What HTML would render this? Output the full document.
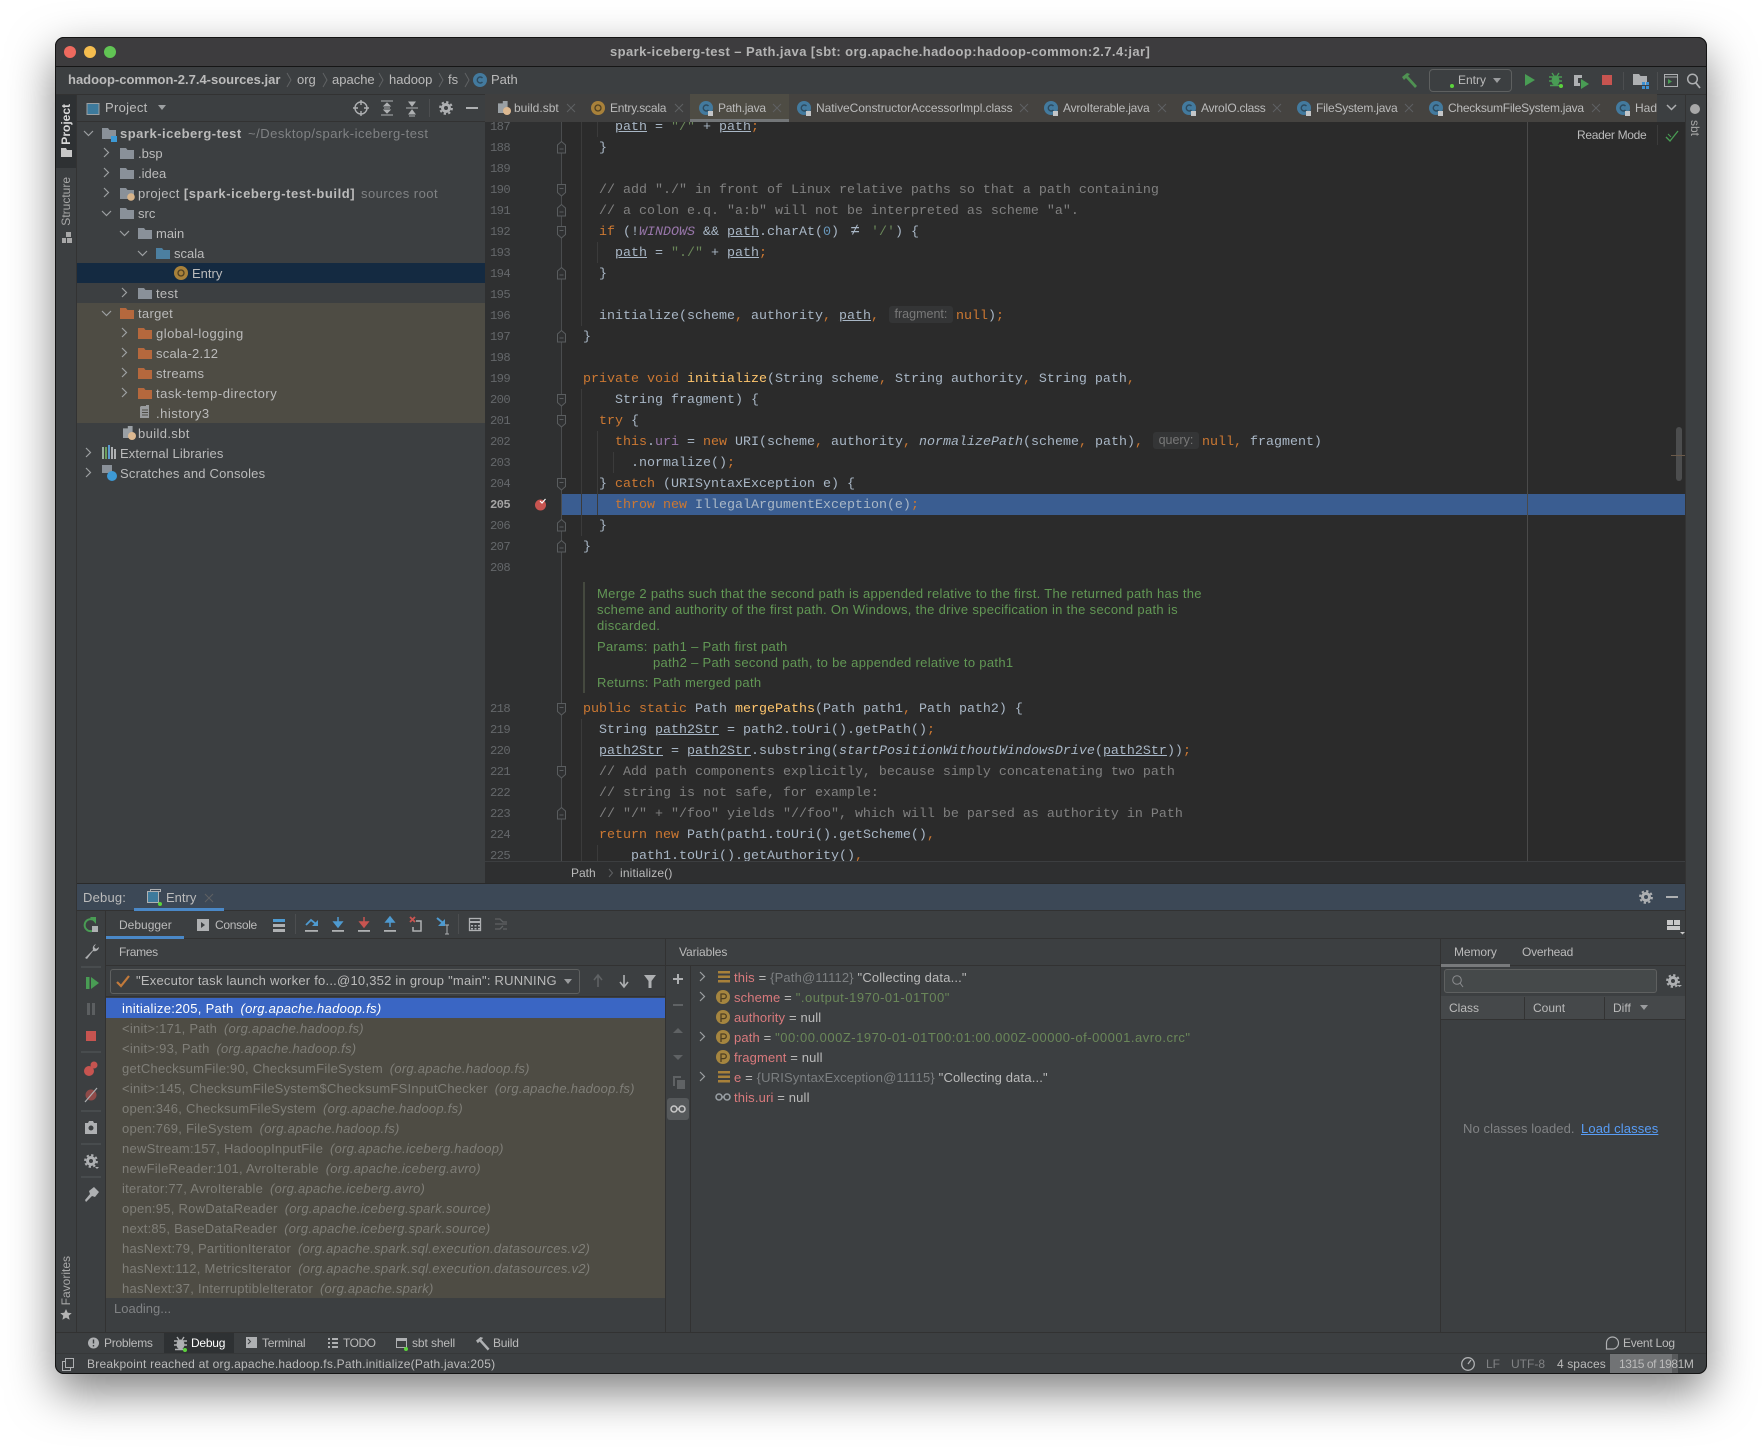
<!DOCTYPE html>
<html><head><meta charset="utf-8"><title>spark-iceberg-test – Path.java</title>
<style>
html,body{margin:0;padding:0;background:#fff;width:1762px;height:1448px;overflow:hidden}
body{position:relative;font-family:"Liberation Sans",sans-serif;font-size:13px;color:#bbb}
.b{position:absolute}
.t{position:absolute;white-space:pre;line-height:20px;height:20px}
.s{font-size:12px}
.m{color:#808284}
.c{position:absolute;left:583px;margin-top:1px;white-space:pre;font-family:"Liberation Mono",monospace;font-size:13.33px;line-height:21px;height:21px;color:#a9b7c6}
.n{position:absolute;left:490px;margin-top:1px;font-family:"Liberation Mono",monospace;font-size:12.2px;letter-spacing:-.65px;line-height:21px;color:#64676a}
.k{color:#cc7832}.f{color:#ffc66d}.g{color:#808080}.st{color:#6a8759}.u{text-decoration:underline}.w{color:#9876aa;font-style:italic}.i{font-style:italic}.q{color:#9876aa}.h{color:#6897bb}
.ne{display:inline-block;width:16px;text-align:center;font-size:16px;line-height:16px}
.ch{display:inline-block;background:#343536;color:#787878;border-radius:3px;font-family:"Liberation Sans",sans-serif;font-size:12.5px;line-height:17px;text-align:center;margin:0 3px 0 10px;vertical-align:1px}
.d{position:absolute;left:597px;white-space:pre;color:#629755;font-size:13px;line-height:16px;letter-spacing:.32px}
.fr{position:absolute;left:122px;margin-top:1px;white-space:pre;color:#7f7e78;font-size:13px;line-height:20px;letter-spacing:.25px}
.fr i{margin-left:3px}
.v{position:absolute;left:734px;margin-top:1px;white-space:pre;line-height:20px;font-size:13px;color:#bbb;letter-spacing:.15px}
.v b{font-weight:normal;color:#d97a7d}.v em{font-style:normal;color:#7c7f81}.v s{text-decoration:none;color:#6a8759;letter-spacing:.52px}
.vt{position:absolute;writing-mode:vertical-rl;transform:rotate(180deg);white-space:pre;font-size:12px;line-height:14px}
.tr .t{margin-top:1px}
</style></head><body>
<div class="b" style="left:55px;top:37px;width:1652px;height:1337px;border-radius:9px;background:#3c3f41;box-shadow:0 18px 46px rgba(0,0,0,.5);overflow:hidden">
</div>
<!-- title -->
<div class="b" style="left:55px;top:37px;width:1652px;height:29px;background:#3d3c3e;border-radius:9px 9px 0 0"></div>
<div class="b" style="left:55px;top:66px;width:1652px;height:1px;background:#161616"></div>
<div class="t" style="left:610px;top:42px;font-weight:bold;color:#b4b4b4;font-size:13px;letter-spacing:.42px">spark-iceberg-test – Path.java [sbt: org.apache.hadoop:hadoop-common:2.7.4:jar]</div>
<!-- nav -->
<div class="b" style="left:55px;top:94px;width:1652px;height:1px;background:#323232"></div>
<div class="t" style="left:68px;top:70px;font-weight:bold">hadoop-common-2.7.4-sources.jar</div>
<div class="t" style="left:297px;top:70px">org</div><div class="t" style="left:332px;top:70px">apache</div><div class="t" style="left:389px;top:70px">hadoop</div><div class="t" style="left:448px;top:70px">fs</div><div class="t" style="left:491px;top:70px">Path</div>
<div class="b" style="left:1429px;top:69px;width:81px;height:21px;border:1px solid #5e6060;border-radius:4px"></div>
<div class="t" style="left:1458px;top:70px;font-size:12px">Entry</div>
<div class="b" style="left:1623px;top:72px;width:1px;height:18px;background:#4c4e50"></div>
<div class="b" style="left:1657px;top:72px;width:1px;height:18px;background:#4c4e50"></div>
<!-- left strip -->
<div class="b" style="left:76px;top:95px;width:1px;height:1238px;background:#333"></div>
<div class="b" style="left:56px;top:95px;width:20px;height:73px;background:#2e3133"></div>
<div class="vt" style="left:59px;top:104px;font-weight:bold;color:#d8d8d8">Project</div>
<div class="vt" style="left:59px;top:177px;color:#a8a8a8">Structure</div>
<div class="vt" style="left:59px;top:1256px;color:#a8a8a8">Favorites</div>
<!-- project -->
<div class="b" style="left:77px;top:121px;width:408px;height:1px;background:#323232"></div>
<div class="t" style="left:105px;top:98px;letter-spacing:.3px">Project</div>
<div class="b" style="left:429px;top:99px;width:1px;height:18px;background:#4c4e50"></div>
<div class="b" style="left:77px;top:263px;width:408px;height:20px;background:#142a41"></div>
<div class="b" style="left:77px;top:303px;width:408px;height:120px;background:#4e4c44"></div>
<div class="tr">
<div class="t" style="left:120px;top:123px;font-weight:bold;letter-spacing:.5px">spark-iceberg-test</div><div class="t m" style="left:248px;top:123px;letter-spacing:.5px">~/Desktop/spark-iceberg-test</div>
<div class="t" style="left:138px;top:143px">.bsp</div>
<div class="t" style="left:138px;top:163px">.idea</div>
<div class="t" style="left:138px;top:183px;letter-spacing:.4px">project <b style="letter-spacing:.56px">[spark-iceberg-test-build]</b></div><div class="t m" style="left:361px;top:183px;letter-spacing:.46px">sources root</div>
<div class="t" style="left:138px;top:203px">src</div>
<div class="t" style="left:156px;top:223px">main</div>
<div class="t" style="left:174px;top:243px">scala</div>
<div class="t" style="left:192px;top:263px">Entry</div>
<div class="t" style="left:156px;top:283px;letter-spacing:.3px">test</div>
<div class="t" style="left:138px;top:303px;letter-spacing:.3px">target</div>
<div class="t" style="left:156px;top:323px;letter-spacing:.48px">global-logging</div>
<div class="t" style="left:156px;top:343px;letter-spacing:.22px">scala-2.12</div>
<div class="t" style="left:156px;top:363px;letter-spacing:.3px">streams</div>
<div class="t" style="left:156px;top:383px;letter-spacing:.53px">task-temp-directory</div>
<div class="t" style="left:156px;top:403px;letter-spacing:.5px">.history3</div>
<div class="t" style="left:138px;top:423px;letter-spacing:.37px">build.sbt</div>
<div class="t" style="left:120px;top:443px;letter-spacing:.13px">External Libraries</div>
<div class="t" style="left:120px;top:463px;letter-spacing:.2px">Scratches and Consoles</div>
</div>
<!-- tabs -->
<div class="b" style="left:485px;top:94px;width:205px;height:28px;background:#3f3f3f"></div>
<div class="b" style="left:690px;top:94px;width:99px;height:25px;background:#4e4c44"></div>
<div class="b" style="left:690px;top:119px;width:99px;height:3px;background:#737678"></div>
<div class="b" style="left:789px;top:94px;width:868px;height:28px;background:#454340"></div>
<div class="b" style="left:1685px;top:94px;width:1px;height:1238px;background:#333"></div>
<div class="t s" style="left:514px;top:98px">build.sbt</div>
<div class="t s" style="left:610px;top:98px;letter-spacing:-.2px">Entry.scala</div>
<div class="t s" style="left:718px;top:98px;letter-spacing:-.25px">Path.java</div>
<div class="t s" style="left:816px;top:98px;letter-spacing:-.06px">NativeConstructorAccessorImpl.class</div>
<div class="t s" style="left:1063px;top:98px;letter-spacing:-.2px">AvroIterable.java</div>
<div class="t s" style="left:1201px;top:98px;letter-spacing:-.28px">AvroIO.class</div>
<div class="t s" style="left:1316px;top:98px;letter-spacing:-.22px">FileSystem.java</div>
<div class="t s" style="left:1448px;top:98px;letter-spacing:-.24px">ChecksumFileSystem.java</div>
<div class="b" style="left:1635px;top:98px;width:22px;height:20px;overflow:hidden"><div class="t s" style="left:0;top:0">Hadoop</div></div>
<div class="t s" style="left:1688px;top:120px;writing-mode:vertical-rl;line-height:14px;height:auto;color:#a8a8a8">sbt</div>
<!-- editor -->
<div class="b" style="left:485px;top:122px;width:1200px;height:739px;background:#2b2b2b"></div>
<div class="b" style="left:485px;top:122px;width:77px;height:739px;background:#2f3031"></div>
<div class="b" style="left:562px;top:494px;width:1123px;height:21px;background:#3a5d91"></div>
<div class="b" style="left:1527px;top:122px;width:1px;height:739px;background:#4a4a4a"></div>
<div class="b" style="left:561px;top:122px;width:1px;height:739px;background:#4a4c4e"></div>
<div class="b" style="left:581px;top:122px;width:1px;height:204px;background:#3b3b3b"></div>
<div class="b" style="left:581px;top:389px;width:1px;height:147px;background:#3b3b3b"></div>
<div class="b" style="left:597px;top:122px;width:1px;height:15px;background:#3b3b3b"></div>
<div class="b" style="left:597px;top:242px;width:1px;height:21px;background:#3b3b3b"></div>
<div class="b" style="left:597px;top:431px;width:1px;height:84px;background:#3b3b3b"></div>
<div class="b" style="left:613px;top:452px;width:1px;height:21px;background:#3b3b3b"></div>
<div class="b" style="left:581px;top:719px;width:1px;height:142px;background:#3b3b3b"></div>
<div class="b" style="left:597px;top:845px;width:1px;height:16px;background:#3b3b3b"></div>
<div class="b" style="left:583px;top:582px;width:2px;height:111px;background:#45493f"></div>
<div class="b" style="left:1676px;top:427px;width:6px;height:54px;background:#4c4d4e;border-radius:3px"></div>
<div class="b" style="left:1671px;top:455px;width:14px;height:1px;background:#6b5a4a"></div>
<div class="t s" style="left:1577px;top:125px;letter-spacing:-.3px">Reader Mode</div>
<div class="b" style="left:1657px;top:125px;width:1px;height:20px;background:#3b3b3b"></div>
<div class="b" style="left:0;top:0;width:1762px;height:1448px;clip-path:inset(122px 0 587px 0)">
<div class="n" style="top:116px">187</div><div class="n" style="top:137px">188</div><div class="n" style="top:158px">189</div><div class="n" style="top:179px">190</div><div class="n" style="top:200px">191</div><div class="n" style="top:221px">192</div><div class="n" style="top:242px">193</div><div class="n" style="top:263px">194</div><div class="n" style="top:284px">195</div><div class="n" style="top:305px">196</div><div class="n" style="top:326px">197</div><div class="n" style="top:347px">198</div><div class="n" style="top:368px">199</div><div class="n" style="top:389px">200</div><div class="n" style="top:410px">201</div><div class="n" style="top:431px">202</div><div class="n" style="top:452px">203</div><div class="n" style="top:473px">204</div><div class="n" style="top:494px;color:#a4a3a3;font-weight:bold">205</div><div class="n" style="top:515px">206</div><div class="n" style="top:536px">207</div><div class="n" style="top:557px">208</div><div class="n" style="top:698px">218</div><div class="n" style="top:719px">219</div><div class="n" style="top:740px">220</div><div class="n" style="top:761px">221</div><div class="n" style="top:782px">222</div><div class="n" style="top:803px">223</div><div class="n" style="top:824px">224</div><div class="n" style="top:845px">225</div>
<div class="c" style="top:116px">    <span class="u">path</span> = <span class="st">"/"</span> + <span class="u">path</span><span class="k">;</span></div>
<div class="c g" style="top:137px;color:#a9b7c6">  }</div>
<div class="c g" style="top:179px;color:#808080">  // add "./" in front of Linux relative paths so that a path containing</div>
<div class="c g" style="top:200px;color:#808080">  // a colon e.q. "a:b" will not be interpreted as scheme "a".</div>
<div class="c" style="top:221px">  <span class="k">if</span> (!<span class="w">WINDOWS</span> &amp;&amp; <span class="u">path</span>.charAt(<span class="h">0</span>) <span class="ne">≠</span> <span class="st">'/'</span>) {</div>
<div class="c" style="top:242px">    <span class="u">path</span> = <span class="st">"./"</span> + <span class="u">path</span><span class="k">;</span></div>
<div class="c" style="top:263px">  }</div>
<div class="c" style="top:305px">  initialize(scheme<span class="k">,</span> authority<span class="k">,</span> <span class="u">path</span><span class="k">,</span><span class="ch" style="width:64px">fragment:</span><span class="k">null</span>)<span class="k">;</span></div>
<div class="c" style="top:326px">}</div>
<div class="c" style="top:368px"><span class="k">private void</span> <span class="f">initialize</span>(String scheme<span class="k">,</span> String authority<span class="k">,</span> String path<span class="k">,</span></div>
<div class="c" style="top:389px">    String fragment) {</div>
<div class="c" style="top:410px">  <span class="k">try</span> {</div>
<div class="c" style="top:431px">    <span class="k">this</span>.<span class="q">uri</span> = <span class="k">new</span> URI(scheme<span class="k">,</span> authority<span class="k">,</span> <span class="i">normalizePath</span>(scheme<span class="k">,</span> path)<span class="k">,</span><span class="ch" style="width:46px">query:</span><span class="k">null,</span> fragment)</div>
<div class="c" style="top:452px">      .normalize()<span class="k">;</span></div>
<div class="c" style="top:473px">  } <span class="k">catch</span> (URISyntaxException e) {</div>
<div class="c" style="top:494px">    <span class="k">throw new</span> IllegalArgumentException(e)<span class="k">;</span></div>
<div class="c" style="top:515px">  }</div>
<div class="c" style="top:536px">}</div>
<div class="c" style="top:698px"><span class="k">public static</span> Path <span class="f">mergePaths</span>(Path path1<span class="k">,</span> Path path2) {</div>
<div class="c" style="top:719px">  String <span class="u">path2Str</span> = path2.toUri().getPath()<span class="k">;</span></div>
<div class="c" style="top:740px">  <span class="u">path2Str</span> = <span class="u">path2Str</span>.substring(<span class="i">startPositionWithoutWindowsDrive</span>(<span class="u">path2Str</span>))<span class="k">;</span></div>
<div class="c" style="top:761px;color:#808080">  // Add path components explicitly, because simply concatenating two path</div>
<div class="c" style="top:782px;color:#808080">  // string is not safe, for example:</div>
<div class="c" style="top:803px;color:#808080">  // "/" + "/foo" yields "//foo", which will be parsed as authority in Path</div>
<div class="c" style="top:824px">  <span class="k">return new</span> Path(path1.toUri().getScheme()<span class="k">,</span></div>
<div class="c" style="top:845px">      path1.toUri().getAuthority()<span class="k">,</span></div>
</div>
<div class="d" style="top:586px">Merge 2 paths such that the second path is appended relative to the first. The returned path has the</div>
<div class="d" style="top:602px">scheme and authority of the first path. On Windows, the drive specification in the second path is</div>
<div class="d" style="top:618px">discarded.</div>
<div class="d" style="top:639px">Params:</div><div class="d" style="top:639px;left:653px">path1 – Path first path</div>
<div class="d" style="top:655px;left:653px">path2 – Path second path, to be appended relative to path1</div>
<div class="d" style="top:675px">Returns:</div><div class="d" style="top:675px;left:653px">Path merged path</div>
<!-- breadcrumb -->
<div class="b" style="left:485px;top:861px;width:1200px;height:22px;background:#2e2f30;border-top:1px solid #3c3e40;box-sizing:border-box"></div>
<div class="t s" style="left:571px;top:863px">Path</div><div class="t s" style="left:620px;top:863px;letter-spacing:.15px">initialize()</div>
<!-- debug -->
<div class="b" style="left:77px;top:883px;width:1608px;height:1px;background:#2a2a2a"></div>
<div class="b" style="left:77px;top:884px;width:1608px;height:26px;background:#3c4856"></div>
<div class="b" style="left:77px;top:910px;width:1608px;height:1px;background:#323232"></div>
<div class="b" style="left:134px;top:908px;width:90px;height:3px;background:#4a88c7"></div>
<div class="t" style="left:83px;top:888px;letter-spacing:.2px">Debug:</div><div class="t" style="left:166px;top:888px">Entry</div>
<div class="b" style="left:105px;top:911px;width:1px;height:421px;background:#323232"></div>
<div class="b" style="left:106px;top:938px;width:1579px;height:1px;background:#323232"></div>
<div class="b" style="left:106px;top:936px;width:78px;height:3px;background:#4a88c7"></div>
<div class="t s" style="left:119px;top:915px">Debugger</div><div class="t s" style="left:215px;top:915px;letter-spacing:-.3px">Console</div>
<div class="b" style="left:295px;top:914px;width:1px;height:20px;background:#4c4e50"></div>
<div class="b" style="left:458px;top:914px;width:1px;height:20px;background:#4c4e50"></div>
<div class="b" style="left:665px;top:939px;width:1px;height:393px;background:#323232"></div>
<div class="b" style="left:690px;top:965px;width:1px;height:367px;background:#323232"></div>
<div class="b" style="left:1440px;top:939px;width:1px;height:393px;background:#323232"></div>
<div class="b" style="left:106px;top:965px;width:1579px;height:1px;background:#323232"></div>
<div class="t s" style="left:119px;top:942px;letter-spacing:-.3px">Frames</div><div class="t s" style="left:679px;top:942px;letter-spacing:-.1px">Variables</div>
<div class="b" style="left:110px;top:969px;width:468px;height:23px;border:1px solid #5e6060;border-radius:3px"></div>
<div class="t" style="left:136px;top:971px;letter-spacing:.23px">"Executor task launch worker fo...@10,352 in group "main": RUNNING</div>
<div class="b" style="left:106px;top:996px;width:559px;height:1px;background:#323232"></div>
<div class="b" style="left:106px;top:998px;width:559px;height:20px;background:#3a66c4"></div>
<div class="b" style="left:106px;top:1018px;width:559px;height:280px;background:#4e4c44"></div>
<div class="fr" style="top:998px;color:#fff;letter-spacing:.3px">initialize:205, Path <i>(org.apache.hadoop.fs)</i></div>
<div class="fr" style="top:1018px">&lt;init&gt;:171, Path <i>(org.apache.hadoop.fs)</i></div>
<div class="fr" style="top:1038px">&lt;init&gt;:93, Path <i>(org.apache.hadoop.fs)</i></div>
<div class="fr" style="top:1058px">getChecksumFile:90, ChecksumFileSystem <i>(org.apache.hadoop.fs)</i></div>
<div class="fr" style="top:1078px">&lt;init&gt;:145, ChecksumFileSystem$ChecksumFSInputChecker <i>(org.apache.hadoop.fs)</i></div>
<div class="fr" style="top:1098px">open:346, ChecksumFileSystem <i>(org.apache.hadoop.fs)</i></div>
<div class="fr" style="top:1118px">open:769, FileSystem <i>(org.apache.hadoop.fs)</i></div>
<div class="fr" style="top:1138px">newStream:157, HadoopInputFile <i>(org.apache.iceberg.hadoop)</i></div>
<div class="fr" style="top:1158px">newFileReader:101, AvroIterable <i>(org.apache.iceberg.avro)</i></div>
<div class="fr" style="top:1178px">iterator:77, AvroIterable <i>(org.apache.iceberg.avro)</i></div>
<div class="fr" style="top:1198px">open:95, RowDataReader <i>(org.apache.iceberg.spark.source)</i></div>
<div class="fr" style="top:1218px">next:85, BaseDataReader <i>(org.apache.iceberg.spark.source)</i></div>
<div class="fr" style="top:1238px">hasNext:79, PartitionIterator <i>(org.apache.spark.sql.execution.datasources.v2)</i></div>
<div class="fr" style="top:1258px">hasNext:112, MetricsIterator <i>(org.apache.spark.sql.execution.datasources.v2)</i></div>
<div class="fr" style="top:1278px">hasNext:37, InterruptibleIterator <i>(org.apache.spark)</i></div>
<div class="t m" style="left:114px;top:1299px">Loading...</div>
<div class="b" style="left:667px;top:1098px;width:22px;height:22px;background:#56595b;border-radius:3px"></div>
<div class="v" style="top:967px"><b>this</b> = <em>{Path@11112}</em> "Collecting data..."</div>
<div class="v" style="top:987px"><b>scheme</b> = <s>".output-1970-01-01T00"</s></div>
<div class="v" style="top:1007px"><b>authority</b> = null</div>
<div class="v" style="top:1027px"><b>path</b> = <s>"00:00.000Z-1970-01-01T00:01:00.000Z-00000-of-00001.avro.crc"</s></div>
<div class="v" style="top:1047px"><b>fragment</b> = null</div>
<div class="v" style="top:1067px"><b>e</b> = <em>{URISyntaxException@11115}</em> "Collecting data..."</div>
<div class="v" style="top:1087px"><b>this.uri</b> = null</div>
<div class="t s" style="left:1454px;top:942px;letter-spacing:-.1px">Memory</div><div class="t s" style="left:1522px;top:942px;letter-spacing:-.2px">Overhead</div>
<div class="b" style="left:1441px;top:964px;width:69px;height:3px;background:#787a7c"></div>
<div class="b" style="left:1444px;top:969px;width:211px;height:22px;border:1px solid #5e6060;border-radius:3px;background:#45494a"></div>
<div class="b" style="left:1441px;top:996px;width:244px;height:24px;background:#45484a;border-bottom:1px solid #323232;box-sizing:border-box"></div>
<div class="b" style="left:1524px;top:997px;width:1px;height:22px;background:#333"></div><div class="b" style="left:1604px;top:997px;width:1px;height:22px;background:#333"></div>
<div class="t s" style="left:1449px;top:998px">Class</div><div class="t s" style="left:1533px;top:998px">Count</div><div class="t s" style="left:1613px;top:998px">Diff</div>
<div class="t m" style="left:1463px;top:1119px;letter-spacing:.1px">No classes loaded.</div><div class="t" style="left:1581px;top:1119px;color:#589df6;text-decoration:underline;letter-spacing:.12px">Load classes</div>
<!-- bottom -->
<div class="b" style="left:56px;top:1332px;width:1650px;height:1px;background:#323232"></div>
<div class="b" style="left:56px;top:1353px;width:1650px;height:1px;background:#363839"></div>
<div class="b" style="left:164px;top:1333px;width:70px;height:20px;background:#2e3133"></div>
<div class="t s" style="left:104px;top:1333px;letter-spacing:-.25px">Problems</div>
<div class="t s" style="left:191px;top:1333px;color:#fff;letter-spacing:-.25px">Debug</div>
<div class="t s" style="left:262px;top:1333px;letter-spacing:-.25px">Terminal</div>
<div class="t s" style="left:343px;top:1333px;letter-spacing:-.5px">TODO</div>
<div class="t s" style="left:412px;top:1333px;letter-spacing:-.1px">sbt shell</div>
<div class="t s" style="left:493px;top:1333px;letter-spacing:-.2px">Build</div>
<div class="t s" style="left:1623px;top:1333px;letter-spacing:-.25px">Event Log</div>
<div class="t s" style="left:87px;top:1354px;letter-spacing:.22px">Breakpoint reached at org.apache.hadoop.fs.Path.initialize(Path.java:205)</div>
<div class="b" style="left:1610px;top:1354px;width:62px;height:19px;background:#717375"></div>
<div class="b" style="left:1672px;top:1354px;width:6px;height:19px;background:#585a5c"></div>
<div class="t s m" style="left:1486px;top:1354px">LF</div><div class="t s m" style="left:1511px;top:1354px">UTF-8</div><div class="t s" style="left:1557px;top:1354px;letter-spacing:.1px">4 spaces</div><div class="t s" style="left:1619px;top:1354px;letter-spacing:-.43px">1315 of 1981M</div>

<!-- icons -->
<svg class="b" style="left:0;top:0" width="1762" height="1448" viewBox="0 0 1762 1448">
<defs>
<g id="fo"><path d="M0 0h6l1.5 2H14v9H0z"/></g>
<g id="cr"><path d="M1 0l4.5 4.5L1 9" fill="none" stroke="#9da0a2" stroke-width="1.2"/></g>
<g id="cd"><path d="M0 1l4.5 4.5L9 1" fill="none" stroke="#9da0a2" stroke-width="1.2"/></g>
<g id="xx"><path d="M0 0l8 8M8 0L0 8" stroke="#5f6163" stroke-width="1" fill="none"/></g>
<g id="cl"><circle cx="7" cy="7" r="7" fill="#437a9e"/><path d="M9.5 5A3 3 0 1 0 9.5 9" fill="none" stroke="#2d4a5e" stroke-width="1.4"/><rect x="9" y="10" width="5" height="5" fill="#c4c6c8"/></g>
<g id="cn"><circle cx="7" cy="7" r="7" fill="#437a9e"/><path d="M9.5 5A3 3 0 1 0 9.5 9" fill="none" stroke="#2d4a5e" stroke-width="1.4"/></g>
<g id="ob"><circle cx="7" cy="7" r="7" fill="#a8813a"/><circle cx="7" cy="7" r="3" fill="none" stroke="#4e3f22" stroke-width="1.3"/></g>
<g id="sb"><path d="M0 2h4V0h4v10H0z" fill="#9aa0a5" transform="translate(1 0) scale(1.2)"/><circle cx="10" cy="10" r="4" fill="#dcb890"/></g>
<g id="pp"><circle cx="7" cy="7" r="7" fill="#a5853f"/><path d="M5 12V4h3a2.2 2.2 0 0 1 0 4.6H5" fill="none" stroke="#4e3f22" stroke-width="1.3"/></g>
<g id="ba"><path d="M0 0h12v2.5H0zM0 4.500h12V7H0zM0 9h12v2.500H0z"/></g>
<g id="ge"><circle cx="7" cy="7" r="3.500" fill="none" stroke-width="3" stroke="currentColor"/><circle cx="7" cy="7" r="5.900" fill="none" stroke-width="2" stroke-dasharray="2.300 2.330" stroke="currentColor"/></g>
<g id="fd"><path d="M.5.500h8v8L4.500 12 .5 8.500z" fill="#2f3031" stroke="#5a5d5f"/><path d="M2.500 4.500h4" stroke="#5a5d5f"/></g>
<g id="fu"><path d="M.5 12h8V4L4.500.500.5 4z" fill="#2f3031" stroke="#5a5d5f"/><path d="M2.500 8h4" stroke="#5a5d5f"/></g>
<g id="gl"><circle cx="4" cy="4" r="3" fill="none" stroke="currentColor" stroke-width="1.500"/><circle cx="12" cy="4" r="3" fill="none" stroke="currentColor" stroke-width="1.500"/><path d="M7 4h2" stroke="currentColor" stroke-width="1.500"/></g>
<g id="bg"><ellipse cx="6.500" cy="7.500" rx="4" ry="5"/><path d="M0 4h13M0 8h13M1 12.500h11M3 0l2 3M10 0L8 3" stroke="currentColor" stroke-width="1.400"/></g>
<g id="hm"><path d="M0 4L5 0l3 1-2 2 9 10-2 2L4 5 2 7z"/></g>
</defs>
<!-- traffic lights -->
<circle cx="70" cy="52" r="6" fill="#ee6a5f"/><circle cx="90" cy="52" r="6" fill="#f5bd4f"/><circle cx="110" cy="52" r="6" fill="#61c454"/>
<!-- breadcrumb seps -->
<g fill="none" stroke="#606264" stroke-width="1"><path d="M287 73l4 7-4 7M323 73l4 7-4 7M379 73l4 7-4 7M439 73l4 7-4 7M465 73l4 7-4 7"/></g>
<use href="#cn" x="473" y="73"/>
<!-- nav right -->
<use href="#hm" x="1402" y="73" fill="#4f9152"/>
<circle cx="1452" cy="86" r="2" fill="#5bd23c"/><path d="M1493 78h8l-4 5z" fill="#9a9c9e"/>
<path d="M1525 74l10 6-10 6z" fill="#499c54"/>
<use href="#bg" x="1549" y="73" fill="#499c54" color="#499c54"/><circle cx="1561" cy="86" r="2" fill="#5bd23c"/>
<path d="M1574 75h8v3h-4v5h2v3h-6z" fill="#aeb0b2"/><path d="M1581 79l8 5-8 5z" fill="#499c54"/>
<rect x="1602" y="75" width="10" height="10" fill="#c75450"/>
<use href="#fo" x="1633" y="74" fill="#aeb0b2"/><path d="M1642 82h3v3h-3zM1646 82h3v3h-3zM1642 86h3v3h-3zM1646 86h3v3h-3z" fill="#3d8fd0"/>
<rect x="1664.500" y="74.500" width="13" height="12" fill="none" stroke="#aeb0b2"/><path d="M1664 77h14" stroke="#aeb0b2"/><path d="M1668 79l4 2.500-4 2.500z" fill="#499c54"/>
<circle cx="1692.500" cy="79" r="4.800" fill="none" stroke="#aeb0b2" stroke-width="1.500"/><path d="M1696 83l4 5" stroke="#aeb0b2" stroke-width="1.800"/>
<!-- left strip -->
<path d="M61 148h5l1 2h5v7H61z" fill="#c8c8c8"/>
<path d="M66 232h5v5h-5zM62 238h4v5h-4zM67 238h5v5h-5z" fill="#a8a8a8"/>
<path d="M66 1309l1.700 3.700 4 .4-3 2.700.9 4-3.600-2.200-3.600 2.200.9-4-3-2.700 4-.4z" fill="#b4b4b4"/>
<!-- project header -->
<rect x="87" y="103.500" width="12" height="11" fill="#3d7a9c" stroke="#9da0a2"/><path d="M158 105h8l-4 5z" fill="#9da0a2"/>
<circle cx="361" cy="108" r="6" fill="none" stroke="#aeb0b2" stroke-width="1.400"/><path d="M361 100v5M361 111v5M353 108h5M364 108h5" stroke="#aeb0b2" stroke-width="1.400"/>
<path d="M381 101h12M381 115h12M387 103l-3 3h6zM387 113l-3-3h6z" stroke="#aeb0b2" fill="#aeb0b2"/><path d="M384 108h6" stroke="#aeb0b2"/>
<path d="M406 108h12M412 106l-3-4h6zM412 110l-3 4h6z" stroke="#aeb0b2" fill="#aeb0b2"/><path d="M409 116h6" stroke="#aeb0b2"/>
<use href="#ge" x="439" y="101" color="#aeb0b2"/>
<rect x="466" y="107" width="12" height="2" fill="#aeb0b2"/>
<!-- tree -->
<use href="#cd" x="84" y="130"/><use href="#cr" x="103" y="148"/><use href="#cr" x="103" y="168"/><use href="#cr" x="103" y="188"/><use href="#cd" x="102" y="210"/><use href="#cd" x="120" y="230"/><use href="#cd" x="138" y="250"/><use href="#cr" x="121" y="288"/><use href="#cd" x="102" y="310"/><use href="#cr" x="121" y="328"/><use href="#cr" x="121" y="348"/><use href="#cr" x="121" y="368"/><use href="#cr" x="121" y="388"/><use href="#cr" x="85" y="448"/><use href="#cr" x="85" y="468"/>
<use href="#fo" x="102" y="128" fill="#8a9199"/><rect x="111" y="136" width="6" height="6" fill="#3d9ad6"/>
<use href="#fo" x="120" y="148" fill="#8a9199"/><use href="#fo" x="120" y="168" fill="#8a9199"/><use href="#fo" x="120" y="188" fill="#8a9199"/><circle cx="131" cy="197" r="3.800" fill="#d8b48a"/>
<use href="#fo" x="120" y="208" fill="#8a9199"/><use href="#fo" x="138" y="228" fill="#8a9199"/><use href="#fo" x="156" y="248" fill="#4c7fa0"/>
<use href="#ob" x="174" y="266"/>
<use href="#fo" x="138" y="288" fill="#8a9199"/>
<use href="#fo" x="120" y="308" fill="#b5683d"/><use href="#fo" x="138" y="328" fill="#b5683d"/><use href="#fo" x="138" y="348" fill="#b5683d"/><use href="#fo" x="138" y="368" fill="#b5683d"/><use href="#fo" x="138" y="388" fill="#b5683d"/>
<path d="M141 406h5v-1h3v13h-9v-11z" fill="#9a9c9e"/><path d="M142 410h6M142 412.500h6M142 415h6" stroke="#4e4c44"/>
<use href="#sb" x="122" y="426"/>
<path d="M102 447h2v12h-2z" fill="#9ab0a0"/><path d="M105 447h2v12h-2z" fill="#6a9f5c"/><path d="M108 445h2v14h-2z" fill="#5a9ad0"/><path d="M111 447h2v12h-2zM114 449h2v10h-2z" fill="#aeb0b2"/>
<rect x="102" y="465" width="10" height="8" fill="#8a9199"/><circle cx="112" cy="476" r="5" fill="#3d9ad6"/>
<!-- tab icons -->
<use href="#sb" x="497" y="101"/><use href="#xx" x="567" y="104"/>
<use href="#ob" x="591" y="101"/><use href="#xx" x="675" y="104"/>
<use href="#cl" x="699" y="101"/><use href="#xx" x="773" y="104"/>
<use href="#cl" x="797" y="101"/><use href="#xx" x="1020" y="104"/>
<use href="#cl" x="1044" y="101"/><use href="#xx" x="1158" y="104"/>
<use href="#cl" x="1182" y="101"/><use href="#xx" x="1273" y="104"/>
<use href="#cl" x="1297" y="101"/><use href="#xx" x="1405" y="104"/>
<use href="#cl" x="1429" y="101"/><use href="#xx" x="1592" y="104"/>
<use href="#cl" x="1616" y="101"/>
<rect x="1657" y="95" width="28" height="27" fill="#3c3f41"/>
<path d="M1667 105l4.500 4.500 4.500-4.500" fill="none" stroke="#aeb0b2" stroke-width="1.500"/>
<circle cx="1695" cy="109" r="5" fill="#a8a8a8"/>
<path d="M1666 137l4 4 8-10" fill="none" stroke="#499c54" stroke-width="1.300"/><path d="M1668 134l3 3" stroke="#499c54" fill="none"/>
<!-- gutter -->
<use href="#fu" x="557" y="141"/><use href="#fd" x="557" y="184"/><use href="#fu" x="557" y="204"/><use href="#fd" x="557" y="226"/><use href="#fu" x="557" y="267"/><use href="#fu" x="557" y="330"/><use href="#fd" x="557" y="394"/><use href="#fd" x="557" y="415"/><use href="#fd" x="557" y="478"/><use href="#fu" x="557" y="519"/><use href="#fu" x="557" y="540"/><use href="#fd" x="557" y="703"/><use href="#fd" x="557" y="766"/><use href="#fu" x="557" y="807"/>
<circle cx="540.500" cy="505" r="5.500" fill="#c75450"/><path d="M540 501l2 2 3.500-4" fill="none" stroke="#fff" stroke-width="1.200"/>
<path d="M609 869l3.500 4-3.500 4" fill="none" stroke="#606264"/>
<!-- debug header -->
<rect x="147.500" y="891.500" width="11" height="11" fill="#3d7a9c" stroke="#aeb0b2"/><rect x="150.500" y="889.500" width="10" height="2" fill="none" stroke="#aeb0b2"/><circle cx="160" cy="904" r="2" fill="#5bd23c"/>
<use href="#xx" x="205" y="894"/>
<use href="#ge" x="1639" y="890" color="#aeb0b2"/><rect x="1666" y="896" width="12" height="2" fill="#aeb0b2"/>
<path d="M1667 920h6v5h-6zM1674 920h6v5h-6zM1667 926h13v4h-13z" fill="#c8c8c8"/><path d="M1680 932h5l-2.500 2.500z" fill="#c8c8c8"/>
<!-- debug toolbar -->
<path d="M197 919h12v12h-12z" fill="#aeb0b2"/><path d="M201 922l4 3-4 3z" fill="#3c3f41"/>
<path d="M273 919h12v3h-12z" fill="#4e9ad0"/><path d="M273 924h12v3h-12zM273 929h12v3h-12z" fill="#aeb0b2"/>
<path d="M306 925l5-5 5 4" fill="none" stroke="#4e9ad0" stroke-width="1.800"/><path d="M318 920v6h-6z" fill="#4e9ad0"/><rect x="305" y="930" width="13" height="1.800" fill="#aeb0b2"/>
<path d="M338 917v9M334 922l4 5 4-5z" stroke="#4e9ad0" fill="#4e9ad0" stroke-width="1.500"/><rect x="332" y="930" width="12" height="1.800" fill="#aeb0b2"/>
<path d="M364 917v9M360 922l4 5 4-5z" stroke="#c75450" fill="#c75450" stroke-width="1.500"/><rect x="358" y="930" width="12" height="1.800" fill="#aeb0b2"/>
<path d="M390 927v-9M386 922l4-5 4 5z" stroke="#4e9ad0" fill="#4e9ad0" stroke-width="1.500"/><rect x="384" y="930" width="12" height="1.800" fill="#aeb0b2"/>
<path d="M410 917l5 5M415 917l-5 5" stroke="#c75450" stroke-width="1.800"/><path d="M416 921h5v10h-8v-4" fill="none" stroke="#aeb0b2" stroke-width="1.500"/>
<path d="M437 918l6 5" stroke="#4e9ad0" stroke-width="2"/><path d="M445 919v7h-7z" fill="#4e9ad0"/><path d="M445 925h4M447 925v9M445 934h4" stroke="#aeb0b2"/>
<rect x="469.500" y="918.500" width="11" height="12" fill="none" stroke="#aeb0b2" stroke-width="1.300"/><path d="M470 921h11v2h-11zM471 925h2v1.500h-2zM474.500 925h2v1.500h-2zM478 925h2v1.500h-2zM471 928h2v1.500h-2zM474.500 928h2v1.500h-2zM478 928h2v1.500h-2z" fill="#aeb0b2"/>
<path d="M495 919h5l3 3h4M495 924h12M495 929h5l3-3M503 929h4" stroke="#5f6264" fill="none" stroke-width="1.300"/>
<!-- debug left col -->
<path d="M95 921a6 6 0 1 0-3 10" fill="none" stroke="#499c54" stroke-width="2"/><path d="M90 917h6v7z" fill="#499c54"/><rect x="92" y="926" width="6" height="6" fill="#aeb0b2"/>
<path d="M85 958l8-8a4.500 4.500 0 0 1 3-6l-2 3 2 2 3-2a4.500 4.500 0 0 1-6 4l-6 8z" fill="#aeb0b2"/>
<path d="M81 967h20M81 1052h20M81 1111h20M81 1144h20M81 1177h20" stroke="#55585a"/>
<rect x="86" y="977" width="3.500" height="12" fill="#499c54"/><path d="M91 977l8 6-8 6z" fill="#499c54"/>
<path d="M87 1003h3v12h-3zM92 1003h3v12h-3z" fill="#5c5f61"/>
<rect x="86" y="1031" width="10" height="10" fill="#c75450"/>
<circle cx="89" cy="1071" r="5" fill="#c75450"/><circle cx="94" cy="1065" r="3.500" fill="#c75450"/>
<circle cx="91" cy="1095" r="5.500" fill="#8f4a48"/><path d="M85 1102l12-14" stroke="#aeb0b2" stroke-width="1.200"/>
<path d="M85 1123h3l1-2h4l1 2h3v11H85z" fill="#aeb0b2"/><circle cx="91" cy="1128" r="2.500" fill="#3c3f41"/>
<use href="#ge" x="84" y="1154" color="#aeb0b2"/><path d="M95 1167h4l-2 2z" fill="#aeb0b2"/>
<path d="M85 1200l5-6-1-3 5-4 5 5-4 5-3-1-6 6z" fill="#aeb0b2"/>
<!-- frames bar -->
<path d="M117 982l4 4 8-10" fill="none" stroke="#c27a3b" stroke-width="2.200"/>
<path d="M564 979h8l-4 5z" fill="#9a9c9e"/>
<path d="M598 987v-11M594 980l4-5 4 5" fill="none" stroke="#5f6264" stroke-width="1.600"/>
<path d="M624 975v11M620 982l4 5 4-5" fill="none" stroke="#aeb0b2" stroke-width="1.600"/>
<path d="M644 975h12l-4.500 6v7h-3v-7z" fill="#aeb0b2"/>
<path d="M678 974v10M673 979h10" stroke="#aeb0b2" stroke-width="2"/>
<path d="M673 1005h10" stroke="#5f6264" stroke-width="2"/>
<path d="M678 1028l5 5h-10z" fill="#5f6264"/><path d="M673 1055h10l-5 5z" fill="#5f6264"/>
<path d="M673 1076h8v2h-6v8h-2zM677 1080h8v9h-8z" fill="#5f6264"/>
<use href="#gl" x="670" y="1105" color="#c8c8c8"/>
<!-- variables -->
<use href="#cr" x="699" y="972"/><use href="#cr" x="699" y="992"/><use href="#cr" x="699" y="1032"/><use href="#cr" x="699" y="1072"/>
<use href="#ba" x="718" y="971" fill="#a8813a"/><use href="#pp" x="716" y="990"/><use href="#pp" x="716" y="1010"/><use href="#pp" x="716" y="1030"/><use href="#pp" x="716" y="1050"/><use href="#ba" x="718" y="1071" fill="#a8813a"/>
<use href="#gl" x="715" y="1093" color="#9aa0a5"/>
<!-- memory -->
<circle cx="1457" cy="980" r="4.300" fill="none" stroke="#8a8c8e"/><path d="M1460 983l3 4" stroke="#8a8c8e"/>
<use href="#ge" x="1666" y="974" color="#aeb0b2"/><path d="M1677 985h5l-2.500 2z" fill="#aeb0b2"/>
<path d="M1640 1005h8l-4 5z" fill="#9a9c9e"/>
<!-- bottom icons -->
<circle cx="93.500" cy="1343" r="5.500" fill="#aeb0b2"/><path d="M93.500 1339.500v4M93.500 1345v1.500" stroke="#3c3f41" stroke-width="1.400"/>
<use href="#bg" x="174" y="1337" fill="#aeb0b2" color="#aeb0b2"/><circle cx="185" cy="1350" r="2" fill="#5bd23c"/>
<rect x="246" y="1337" width="11" height="11" fill="#aeb0b2"/><path d="M248 1339l2.500 2.500-2.500 2.500" fill="none" stroke="#3c3f41"/>
<path d="M328 1338h2v2h-2zM328 1342h2v2h-2zM328 1346h2v2h-2zM332 1338h6v2h-6zM332 1342h6v2h-6zM332 1346h6v2h-6z" fill="#aeb0b2"/>
<rect x="396.500" y="1338.500" width="10" height="9" fill="none" stroke="#aeb0b2"/><path d="M396 1338h11v3h-11z" fill="#aeb0b2"/><circle cx="406" cy="1349" r="2" fill="#5bd23c"/>
<use href="#hm" x="476" y="1337" fill="#aeb0b2" transform="translate(47.600 133.700) scale(.9)"/>
<path d="M1606.500 1343a6 6 0 1 1 6 6h-6z" fill="none" stroke="#aeb0b2" stroke-width="1.200"/>
<rect x="62.500" y="1361.500" width="8" height="9" fill="none" stroke="#aeb0b2"/><rect x="65.500" y="1358.500" width="8" height="9" fill="#3c3f41" stroke="#aeb0b2"/>
<circle cx="1468" cy="1364" r="6.300" fill="none" stroke="#aeb0b2" stroke-width="1.300"/><path d="M1468 1364l3-4" stroke="#aeb0b2" stroke-width="1.300"/>
</svg>
<div class="b" style="left:55px;top:37px;width:1650px;height:1335px;border:1px solid #141414;border-radius:9px"></div>
</body></html>
